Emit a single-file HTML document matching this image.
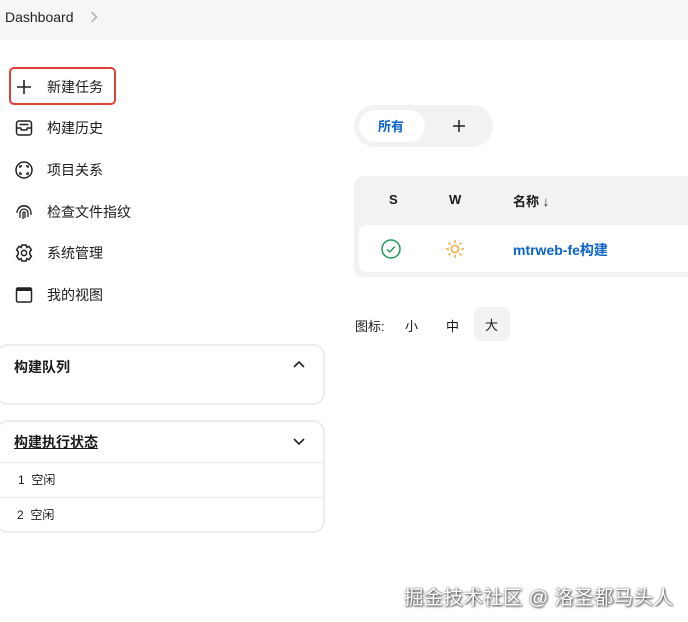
<!DOCTYPE html>
<html><head><meta charset="utf-8"><style>
*{margin:0;padding:0;box-sizing:border-box}
body{width:688px;height:622px;overflow:hidden;background:#fff;font-family:"Liberation Sans","Noto Sans CJK SC",sans-serif;color:#1a1a1a;position:relative}
.a{position:absolute}
.top{left:0;top:0;width:688px;height:40px;background:#f6f6f8}
.nav{font-size:14px}
.it{position:absolute;left:14px;height:22px;display:flex;align-items:center}
.it svg{width:20px;height:20px;margin-right:13px}
.card{border:2px solid #ececf0;border-radius:12px;background:#fff}
</style></head><body>
<div class="a top"></div>
<div class="a" style="left:5px;top:9px;font-size:14px;color:#222">Dashboard</div>
<svg class="a" style="left:90px;top:11px" width="8" height="12" viewBox="0 0 8 12"><path d="M1.5 1l5 5-5 5" fill="none" stroke="#aaa" stroke-width="1.4"/></svg>
<div class="a" style="left:9px;top:67px;width:107px;height:38px;border:2px solid #e0403a;border-radius:5px"></div>
<div class="nav">
<div class="it" style="top:76px"><svg viewBox="0 0 20 20"><path d="M10 3v14M3 10h14" stroke="#222" stroke-width="1.6"/></svg>新建任务</div>
<div class="it" style="top:117px"><svg viewBox="0 0 20 20" fill="none" stroke="#222" stroke-width="1.5"><rect x="2.5" y="3" width="15" height="14" rx="2.5"/><path d="M2.5 10h4l1 2h5l1-2h4M5.5 6.5h9"/></svg>构建历史</div>
<div class="it" style="top:159px"><svg viewBox="0 0 20 20" fill="none" stroke="#222" stroke-width="1.5"><circle cx="10" cy="10" r="8"/><path d="M6 8V6h2M12 6h2v2M14 12v2h-2M8 14H6v-2"/></svg>项目关系</div>
<div class="it" style="top:201px"><svg viewBox="0 0 20 20" fill="none" stroke="#222" stroke-width="1.3"><path d="M4 7a7 7 0 0 1 12 0M3 11a7 7 0 0 1 14 0v2M6 16v-5a4 4 0 0 1 8 0v4M9 17v-6a1 1 0 0 1 2 0v5"/></svg>检查文件指纹</div>
<div class="it" style="top:242px"><svg viewBox="0 0 20 20" fill="none" stroke="#222" stroke-width="1.5"><path d="M8 2h4l.7 2.3 2.2-1 2.5 3.5-1.6 1.8 0 2.8 1.6 1.8-2.5 3.5-2.2-1L12 18H8l-.7-2.3-2.2 1-2.5-3.5L4.2 11.4V8.6L2.6 6.8 5.1 3.3l2.2 1z"/><circle cx="10" cy="10" r="2.6"/></svg>系统管理</div>
<div class="it" style="top:284px"><svg viewBox="0 0 20 20" fill="none" stroke="#222" stroke-width="1.5"><rect x="2.5" y="3" width="15" height="14" rx="1.5"/><path d="M2.5 4.5h15" stroke-width="3"/></svg>我的视图</div>
</div>
<div class="a card" style="left:-4px;top:344px;width:329px;height:61px"></div>
<div class="a" style="left:14px;top:357px;font-size:14px;font-weight:bold">构建队列</div>
<svg class="a" style="left:293px;top:361px" width="12" height="8" viewBox="0 0 12 8"><path d="M1 6l5-5 5 5" fill="none" stroke="#222" stroke-width="1.6"/></svg>
<div class="a card" style="left:-4px;top:420px;width:329px;height:113px"></div>
<div class="a" style="left:14px;top:432px;font-size:14px;font-weight:bold;text-decoration:underline">构建执行状态</div>
<svg class="a" style="left:293px;top:438px" width="12" height="8" viewBox="0 0 12 8"><path d="M1 1l5 5 5-5" fill="none" stroke="#222" stroke-width="1.6"/></svg>
<div class="a" style="left:0;top:462px;width:323px;height:1px;background:#ececf0"></div>
<div class="a" style="left:0;top:497px;width:323px;height:1px;background:#ececf0"></div>
<div class="a" style="left:18px;top:471px;font-size:12px">1&nbsp; 空闲</div>
<div class="a" style="left:17px;top:506px;font-size:12px">2&nbsp; 空闲</div>

<div class="a" style="left:354px;top:105px;width:139px;height:42px;background:#f2f2f5;border-radius:21px"></div>
<div class="a" style="left:359px;top:110px;width:66px;height:32px;background:#fff;border-radius:16px"></div>
<div class="a" style="left:378px;top:116px;font-size:13px;color:#0a63c9;font-weight:bold">所有</div>
<svg class="a" style="left:452px;top:119px" width="14" height="14" viewBox="0 0 14 14"><path d="M7 1v12M1 7h12" stroke="#222" stroke-width="1.5"/></svg>

<div class="a" style="left:354px;top:176px;width:360px;height:101px;background:#f2f2f5;border-radius:10px"></div>
<div class="a" style="left:359px;top:225px;width:340px;height:47px;background:#fff;border-radius:8px"></div>
<div class="a" style="left:389px;top:192px;font-size:13px;font-weight:bold">S</div>
<div class="a" style="left:449px;top:192px;font-size:13px;font-weight:bold">W</div>
<div class="a" style="left:513px;top:191px;font-size:13px;font-weight:bold">名称 ↓</div>
<svg class="a" style="left:381px;top:239px" width="20" height="20" viewBox="0 0 20 20" fill="none" stroke="#1f9a5a" stroke-width="1.5"><circle cx="10" cy="10" r="9"/><path d="M6 10.5l2.8 2.5 5-5.5"/></svg>
<svg class="a" style="left:445px;top:239px" width="20" height="20" viewBox="0 0 20 20" fill="none" stroke="#f3a93a" stroke-width="1.5"><circle cx="10" cy="10" r="3.6"/><path d="M10 1v3M10 16v3M1 10h3M16 10h3M3.6 3.6l2 2M14.4 14.4l2 2M3.6 16.4l2-2M14.4 5.6l2-2"/></svg>
<div class="a" style="left:513px;top:240px;font-size:14px;font-weight:bold;color:#0a63c9">mtrweb-fe构建</div>

<div class="a" style="left:355px;top:316px;font-size:13px">图标:</div>
<div class="a" style="left:405px;top:316px;font-size:13px">小</div>
<div class="a" style="left:446px;top:316px;font-size:13px">中</div>
<div class="a" style="left:474px;top:307px;width:36px;height:34px;background:#f2f2f5;border-radius:7px"></div>
<div class="a" style="left:485px;top:315px;font-size:13px">大</div>

<div class="a" style="left:404px;top:581px;font-size:19.5px;letter-spacing:0.3px;color:#fff;text-shadow:0 0 2px #555,1px 1px 2px #444">掘金技术社区 @ 洛圣都马头人</div>
</body></html>
